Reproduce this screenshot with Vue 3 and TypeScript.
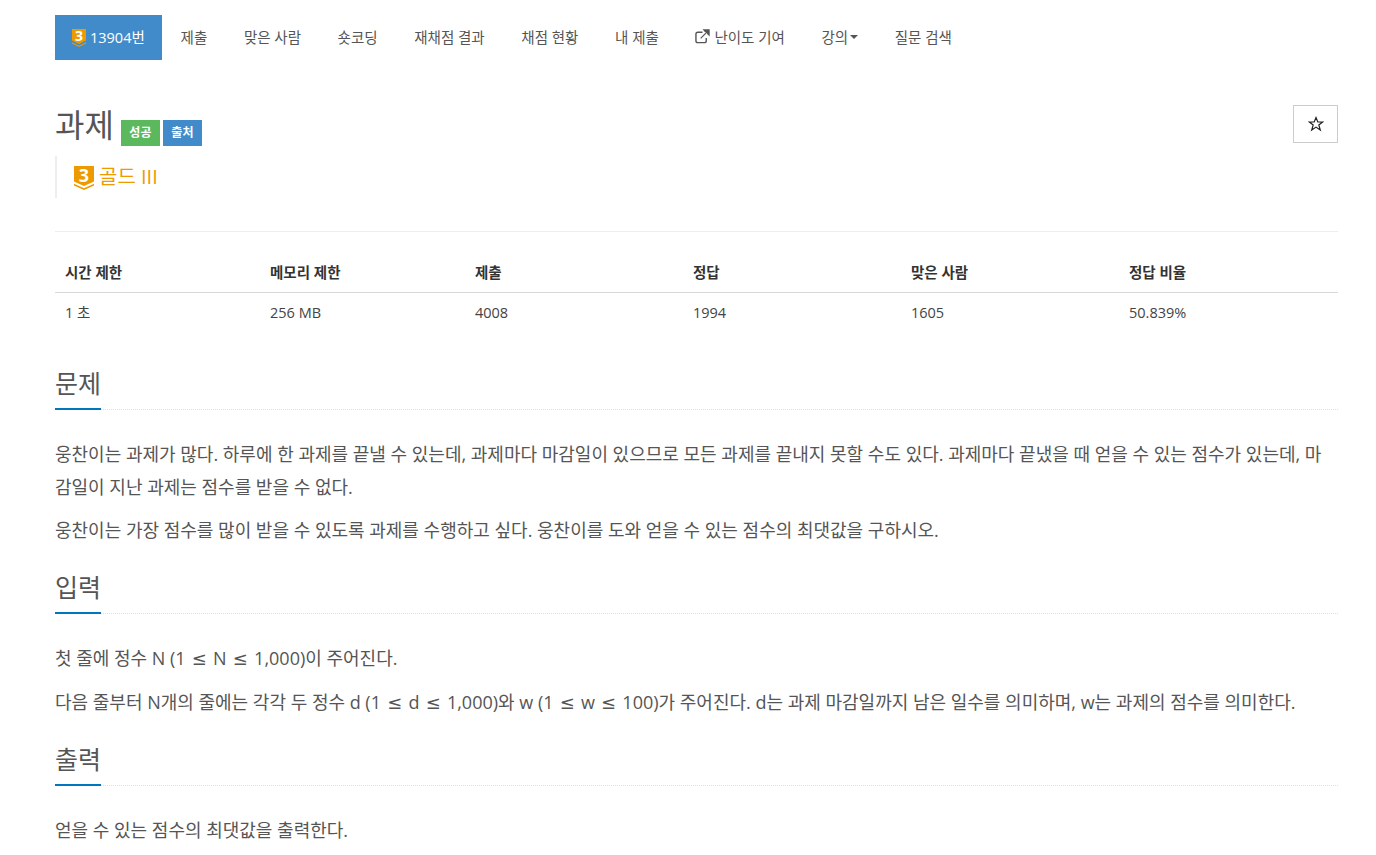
<template>
  <div class="page">
    <ul class="tabs">
      <li v-for="tab in tabs" :key="tab.label" class="tab" :class="{ active: tab.active }">
        <svg v-if="tab.active" class="tier-small" viewBox="0 0 14 18">
          <path d="M0 0H14V11.5L7 15L0 11.5Z" fill="#ec9a00" />
          <path d="M0 13.2L7 16.7L14 13.2V14.6L7 18L0 14.6Z" fill="#ec9a00" />
          <text x="7" y="11.5" text-anchor="middle" class="tier-num">3</text>
        </svg>
        <svg v-if="tab.external" class="ext" viewBox="0 0 16 16">
          <path d="M12 9.5V12.5C12 13.6 11.1 14.5 10 14.5H3C1.9 14.5 1 13.6 1 12.5V5.5C1 4.4 1.9 3.5 3 3.5H8" fill="none" stroke="currentColor" stroke-width="1.5" />
          <path d="M6 10L14 2M9.5 1H15V6.5L13.5 5V3L10.8 2.5Z" fill="currentColor" stroke="currentColor" stroke-width="1.3" />
        </svg>
        <span>{{ tab.label }}</span>
        <i v-if="tab.caret" class="caret"></i>
      </li>
    </ul>

    <div class="title-row">
      <div class="title-left">
        <span class="title">과제</span>
        <span class="label green">성공</span>
        <span class="label blue">출처</span>
      </div>
      <button class="star-btn">
        <svg viewBox="0 0 16 16" width="16" height="16">
          <path d="M8 1.6L9.8 6H14.6L10.8 9L12.3 14L8 11.1L3.7 14L5.2 9L1.4 6H6.2Z" fill="none" stroke="#222" stroke-width="1.2" />
        </svg>
      </button>
    </div>

    <div class="tier">
      <svg class="tier-big" viewBox="0 0 20 24">
        <path d="M0 0H20V15.5L10 20L0 15.5Z" fill="#ec9a00" />
        <path d="M0 17.8L10 22.2L20 17.8V19.6L10 24L0 19.6Z" fill="#ec9a00" />
        <text x="10" y="15.5" text-anchor="middle" class="tier-num big">3</text>
      </svg>
      <span class="tier-name">골드 III</span>
    </div>

    <hr class="rule" />

    <table class="info">
      <colgroup>
        <col v-for="w in colWidths" :key="w.id" :style="{ width: w.px + 'px' }" />
      </colgroup>
      <thead>
        <tr><th v-for="c in columns" :key="c.head">{{ c.head }}</th></tr>
      </thead>
      <tbody>
        <tr><td v-for="c in columns" :key="c.head">{{ c.value }}</td></tr>
      </tbody>
    </table>

    <section v-for="s in sections" :key="s.title" class="section">
      <div class="headline"><h2>{{ s.title }}</h2></div>
      <p v-for="(line, i) in s.lines" :key="i">
        <template v-for="(part, j) in line.split('≤')" :key="j"><span v-if="j" class="leq">≤</span>{{ part }}</template>
      </p>
    </section>
  </div>
</template>

<script setup lang="ts">
interface Tab {
  label: string;
  active?: boolean;
  external?: boolean;
  caret?: boolean;
}

const tabs: Tab[] = [
  { label: '13904번', active: true },
  { label: '제출' },
  { label: '맞은 사람' },
  { label: '숏코딩' },
  { label: '재채점 결과' },
  { label: '채점 현황' },
  { label: '내 제출' },
  { label: '난이도 기여', external: true },
  { label: '강의', caret: true },
  { label: '질문 검색' },
];

const columns = [
  { head: '시간 제한', value: '1 초' },
  { head: '메모리 제한', value: '256 MB' },
  { head: '제출', value: '4008' },
  { head: '정답', value: '1994' },
  { head: '맞은 사람', value: '1605' },
  { head: '정답 비율', value: '50.839%' },
];

const colWidths = [205, 205, 218, 218, 218, 219].map((px, id) => ({ id, px }));

const sections = [
  {
    title: '문제',
    lines: [
      '웅찬이는 과제가 많다. 하루에 한 과제를 끝낼 수 있는데, 과제마다 마감일이 있으므로 모든 과제를 끝내지 못할 수도 있다. 과제마다 끝냈을 때 얻을 수 있는 점수가 있는데, 마감일이 지난 과제는 점수를 받을 수 없다.',
      '웅찬이는 가장 점수를 많이 받을 수 있도록 과제를 수행하고 싶다. 웅찬이를 도와 얻을 수 있는 점수의 최댓값을 구하시오.',
    ],
  },
  {
    title: '입력',
    lines: [
      '첫 줄에 정수 N (1 ≤ N ≤ 1,000)이 주어진다.',
      '다음 줄부터 N개의 줄에는 각각 두 정수 d (1 ≤ d ≤ 1,000)와 w (1 ≤ w ≤ 100)가 주어진다. d는 과제 마감일까지 남은 일수를 의미하며, w는 과제의 점수를 의미한다.',
    ],
  },
  {
    title: '출력',
    lines: ['얻을 수 있는 점수의 최댓값을 출력한다.'],
  },
];
</script>

<style>
html,
body {
  margin: 0;
  background: #fff;
  overflow: hidden;
}
</style>

<style scoped>
.page {
  box-sizing: border-box;
  width: 1376px;
  height: 855px;
  overflow: hidden;
  padding: 15px 38px 0 55px;
  font-family: "Open Sans", "Noto Sans CJK KR", sans-serif;
  color: #333;
}

.tabs {
  display: flex;
  list-style: none;
  margin: 0;
  padding: 0;
  height: 45px;
}

.tab {
  display: flex;
  align-items: center;
  padding: 0 18.3px 2px;
  font-size: 14.5px;
  color: #555;
  white-space: nowrap;
}

.tab.active {
  background: #428bca;
  color: #fff;
  padding: 0 17.5px 2px 17px;
}

.tier-small {
  width: 14px;
  height: 18px;
  margin: 2px 4px 0 0;
  overflow: visible;
}

.tier-num {
  font-family: "Open Sans", sans-serif;
  font-weight: 700;
  font-size: 14px;
  fill: #fff;
}

.tier-num.big {
  font-size: 18px;
}

.ext {
  width: 15px;
  height: 15px;
  margin-right: 4px;
}

.caret {
  width: 0;
  height: 0;
  margin-left: 2px;
  border-top: 4px solid #555;
  border-left: 4px solid transparent;
  border-right: 4px solid transparent;
}

.title-row {
  display: flex;
  justify-content: space-between;
  align-items: flex-start;
  margin-top: 45px;
  height: 51px;
}

.title-left {
  display: flex;
  align-items: flex-end;
  height: 41px;
}

.title {
  font-size: 32px;
  line-height: 36px;
  color: #555;
  margin-right: 7px;
  padding-bottom: 3px;
}

.label {
  display: block;
  width: 39px;
  height: 26px;
  line-height: 26px;
  text-align: center;
  font-size: 12px;
  font-weight: 700;
  color: #fff;
}

.label.green {
  background: #5cb85c;
  margin-right: 3px;
}

.label.blue {
  background: #428bca;
}

.star-btn {
  display: flex;
  align-items: center;
  justify-content: center;
  width: 45px;
  height: 38px;
  padding: 0;
  background: #fff;
  border: 1px solid #ccc;
}

.tier {
  display: flex;
  align-items: center;
  height: 42px;
  padding-left: 17px;
  border-left: 2px solid #eee;
  font-size: 20px;
  color: #ec9a00;
}

.tier-big {
  width: 20px;
  height: 24px;
  margin: 2px 5px 0 0;
  overflow: visible;
}

.tier-name {
  padding-bottom: 3px;
}

.rule {
  margin: 33px 0 0;
  border: 0;
  border-top: 1px solid #eee;
}

.info {
  border-collapse: collapse;
  table-layout: fixed;
  width: 1283px;
  margin: 20px 0 29.6px;
  font-size: 14.5px;
}

.info th {
  text-align: left;
  padding: 11px 10px 9px;
  line-height: 20px;
  font-weight: 700;
  color: #333;
  border-bottom: 1px solid #d8d8d8;
}

.info td {
  padding: 10px;
  line-height: 20px;
  color: #444;
}

.section {
  margin-top: 20px;
}

.headline {
  height: 46px;
  border-bottom: 1px dotted #e0e0e0;
  margin-bottom: 28px;
}

.headline h2 {
  display: inline-block;
  box-sizing: border-box;
  height: 47px;
  margin: 0;
  font-size: 25px;
  line-height: 40px;
  font-weight: 400;
  color: #555;
  border-bottom: 2px solid #0076c0;
}

.section p {
  margin: 0 0 10.5px;
  padding-right: 3px;
  font-size: 18px;
  line-height: 33px;
  color: #555;
}

.leq {
  font-family: "DejaVu Sans", sans-serif;
  margin: 0 1.5px;
}
</style>
